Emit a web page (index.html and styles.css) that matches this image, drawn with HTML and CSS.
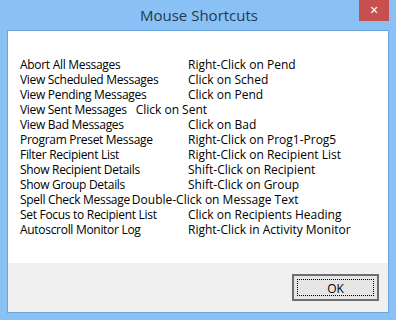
FILE: index.html
```html
<!DOCTYPE html>
<html lang="en">
<head>
    <meta charset="UTF-8">
    <title>Mouse Shortcuts</title>
    <link rel="stylesheet" href="styles.css">
</head>
<body>
    <div class="window">
        <div class="titlebar">
            <div class="title">Mouse Shortcuts</div>
            <div class="close">&#x2715;</div>
        </div>
        <div class="client">
            <div class="list">
                <div class="row"><span class="action">Abort All Messages</span><span>Right-Click on Pend</span></div>
                <div class="row"><span class="action">View Scheduled Messages</span><span>Click on Sched</span></div>
                <div class="row"><span class="action">View Pending Messages</span><span>Click on Pend</span></div>
                <div class="row"><span class="tight">View Sent Messages</span><span class="gap">Click on Sent</span></div>
                <div class="row"><span class="action">View Bad Messages</span><span>Click on Bad</span></div>
                <div class="row"><span class="action">Program Preset Message</span><span>Right-Click on Prog1-Prog5</span></div>
                <div class="row"><span class="action">Filter Recipient List</span><span>Right-Click on Recipient List</span></div>
                <div class="row"><span class="action">Show Recipient Details</span><span>Shift-Click on Recipient</span></div>
                <div class="row"><span class="action">Show Group Details</span><span>Shift-Click on Group</span></div>
                <div class="row"><span class="tight">Spell Check Message</span><span class="nogap">Double-Click on Message Text</span></div>
                <div class="row"><span class="action">Set Focus to Recipient List</span><span>Click on Recipients Heading</span></div>
                <div class="row"><span class="action">Autoscroll Monitor Log</span><span>Right-Click in Activity Monitor</span></div>
            </div>
            <div class="footer">
                <button class="ok"><span>OK</span></button>
            </div>
        </div>
    </div>
</body>
</html>
```

FILE: styles.css
```css
/* Window frame */
body {
    margin: 0;
    font-family: 'Open Sans', sans-serif;
}

.window {
    width: 396px;
    height: 320px;
    box-sizing: border-box;
    background-color: #89c1f5;
    padding: 0 7px 7px 7px;
    display: flex;
    flex-direction: column;
}

/* Title bar */
.titlebar {
    height: 30px;
    display: flex;
    position: relative;
    justify-content: center;
}
.title {
    font-size: 15px;
    color: #24384f;
    line-height: 30px;
    padding-left: 2px;
}
.close {
    position: absolute;
    right: 0;
    top: 0;
    width: 30px;
    height: 21px;
    background-color: #c84f4f;
    color: #fff;
    font-family: 'DejaVu Sans', sans-serif;
    font-size: 11px;
    font-weight: bold;
    line-height: 21px;
    text-align: center;
}

/* Client area */
.client {
    flex: 1;
    border: 1px solid #6aa5de;
    display: flex;
    flex-direction: column;
}
.list {
    height: 232px;
    box-sizing: border-box;
    background-color: #fff;
    padding: 26px 0 0 12px;
    font-size: 12px;
    color: #000;
}
.row {
    display: flex;
    height: 15px;
    line-height: 15px;
    white-space: nowrap;
}
.action,
.tight {
    letter-spacing: -0.3px;
}
.action {
    width: 168px;
}
.gap {
    margin-left: 9px;
}
.nogap {
    margin-left: 2px;
}

/* Button strip */
.footer {
    flex: 1;
    background-color: #f0f0f0;
    display: flex;
    justify-content: flex-end;
    align-items: flex-start;
    padding: 11px 9px 0 0;
}
.ok {
    width: 87px;
    height: 27px;
    padding: 3px;
    border: 2px solid #6e6e6e;
    background-color: #e6e6e6;
    box-sizing: border-box;
    font-family: 'Open Sans', sans-serif;
    font-size: 12px;
    color: #000;
    display: flex;
}
.ok span {
    flex: 1;
    border: 1px dotted #000;
    line-height: 17px;
    text-align: center;
}
```
